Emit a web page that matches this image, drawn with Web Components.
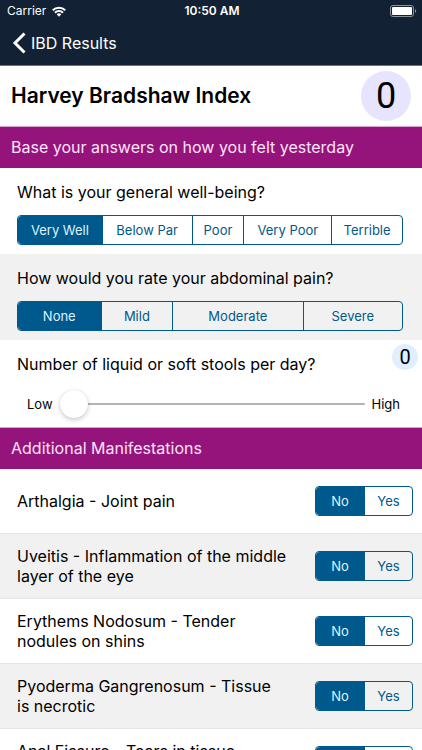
<!DOCTYPE html>
<html lang="en">

	<head>
		<meta charset="UTF-8">
		<meta name="viewport" content="width=device-width, initial-scale=1">
		<title>Harvey Bradshaw Index</title>
		<style>
			body {
				--navy: #122133;
				--purple: #95147b;
				--blue: #00598c;
				--stripe: #f1f1f2;
				margin: 0;
				height: 100vh;
				display: flex;
				flex-direction: column;
				font: 16px/20px Inter, "Liberation Sans", sans-serif;
				color: #000;
				background: #fff;
			}

			main {
				flex: 1;
				min-height: 0;
				overflow-y: auto;
				scrollbar-width: none;
			}
		</style>
	</head>

	<body>
		<status-bar carrier="Carrier" time="10:50 AM"></status-bar>
		<nav-bar>IBD Results</nav-bar>
		<main>
			<score-header score="0">Harvey Bradshaw Index</score-header>
			<section-title>Base your answers on how you felt yesterday</section-title>
			<question-block>
				What is your general well-being?
				<segment-control slot="control" label="General well-being" options="Very Well,Below Par,Poor,Very Poor,Terrible" columns="84fr 90fr 52fr 88fr 71fr"></segment-control>
			</question-block>
			<question-block striped>
				How would you rate your abdominal pain?
				<segment-control slot="control" label="Abdominal pain" options="None,Mild,Moderate,Severe" columns="83fr 72fr 131fr 100fr"></segment-control>
			</question-block>
			<question-block badge="0">
				Number of liquid or soft stools per day?
				<range-slider slot="control" low="Low" high="High" label="Stools per day"></range-slider>
			</question-block>
			<section-title>Additional Manifestations</section-title>
			<symptom-row>Arthalgia - Joint pain</symptom-row>
			<symptom-row striped>Uveitis - Inflammation of the middle layer of the eye</symptom-row>
			<symptom-row>Erythems Nodosum - Tender nodules on shins</symptom-row>
			<symptom-row striped>Pyoderma Gangrenosum - Tissue is&nbsp;necrotic</symptom-row>
			<symptom-row>Anal Fissure - Tears in tissue lining&nbsp;the&nbsp;anus</symptom-row>
		</main>

		<template id="status-bar">
			<style>
				:host {
					display: grid;
					grid-template-columns: 1fr auto 1fr;
					align-items: center;
					height: 22px;
					padding: 0 5px 0 7px;
					font-size: 12px;
					line-height: 16px;
					color: #fff;
					background: var(--navy);
				}
				.left {
					display: flex;
					align-items: center;
					gap: 6px;
				}
				.time {
					font-weight: 600;
				}
				.battery {
					justify-self: end;
				}
				svg {
					display: block;
				}
			</style>
			<div class="left">
				<span class="carrier"></span>
				<svg width="14" height="11" viewBox="0 0 15 11" fill="none" stroke="#fff" stroke-width="2.200">
					<path d="M.8 4.200a9.500 9.500 0 0 1 13.400 0M3.200 6.800a6.100 6.100 0 0 1 8.600 0" />
					<path d="M7.5 11 5 8.500a3.600 3.600 0 0 1 5 0z" fill="#fff" stroke="none" />
				</svg>
			</div>
			<span class="time"></span>
			<svg class="battery" width="27" height="12" viewBox="0 0 27 12">
				<rect x=".5" y=".5" width="23" height="11" rx="2.5" fill="none" stroke="#8a929b" />
				<rect x="2" y="2" width="20" height="8" rx="1" fill="#fff" />
				<path d="M25 4c1.6.5 1.6 3.500 0 4z" fill="#8a929b" />
			</svg>
		</template>

		<template id="nav-bar">
			<style>
				:host {
					display: flex;
					align-items: center;
					box-sizing: border-box;
					height: 44px;
					padding: 0 12px 1px;
					border-bottom: 1px solid #687180;
					background: var(--navy);
				}
				button {
					display: flex;
					align-items: center;
					gap: 5px;
					padding: 0;
					border: 0;
					background: none;
					color: #fff;
					font: inherit;
					cursor: pointer;
				}
			</style>
			<button type="button">
				<svg width="14" height="22" viewBox="0 0 14 22" fill="none" stroke="#fff" stroke-width="3">
					<path d="M12.500 1.500 3 11l9.500 9.500" />
				</svg>
				<slot></slot>
			</button>
		</template>

		<template id="score-header">
			<style>
				:host {
					display: flex;
					align-items: center;
					justify-content: space-between;
					height: 60px;
					padding: 0 11px;
				}
				h1 {
					margin: 0;
					font-size: 21px;
					line-height: 28px;
					font-weight: 600;
				}
				output {
					display: grid;
					place-items: center;
					width: 50px;
					height: 50px;
					border-radius: 50%;
					font-family: Roboto, sans-serif;
					font-size: 36px;
					background: #e6e4fe;
				}
			</style>
			<h1><slot></slot></h1>
			<output></output>
		</template>

		<template id="section-title">
			<style>
				:host {
					display: block;
					padding: 0 11px;
					border-top: 1px solid #dda6d2;
					color: #ffe3fa;
					background: var(--purple);
				}
				h2 {
					margin: 0;
					font-size: inherit;
					line-height: 41px;
					font-weight: 400;
				}
			</style>
			<h2><slot></slot></h2>
		</template>

		<template id="question-block">
			<style>
				:host {
					display: flex;
					flex-direction: column;
					gap: 13px;
					position: relative;
					padding: 14px 19px 9px 17px;
				}
				:host([striped]) {
					background: var(--stripe);
				}
				p {
					margin: 0;
				}
				/* counter in the corner of the block */
				output {
					position: absolute;
					top: 4px;
					right: 4px;
					display: grid;
					place-items: center;
					width: 26px;
					height: 26px;
					border-radius: 50%;
					font-family: Roboto, sans-serif;
					font-size: 20px;
					background: #e0effe;
				}
				output:empty {
					display: none;
				}
			</style>
			<p><slot></slot></p>
			<slot name="control"></slot>
			<output></output>
		</template>

		<template id="segment-control">
			<style>
				:host {
					display: block;
					font-size: 13px;
					line-height: 28px;
				}
				fieldset {
					display: grid;
					min-width: 0;
					margin: 0;
					padding: 0;
					border: 1px solid var(--blue);
					border-radius: 4px;
					overflow: hidden;
				}
				label {
					position: relative;
					color: var(--blue);
					text-align: center;
					white-space: nowrap;
					cursor: pointer;
				}
				label + label {
					border-left: 1px solid var(--blue);
				}
				label:has(:checked) {
					color: #dff2ff;
					background: var(--blue);
				}
				input {
					position: absolute;
					inset: 0;
					margin: 0;
					opacity: 0;
				}
			</style>
			<fieldset></fieldset>
		</template>

		<template id="range-slider">
			<style>
				:host {
					display: flex;
					align-items: center;
					gap: 7px;
					padding: 3px 3px 0 10px;
					font-size: 13px;
				}
				input {
					flex: 1;
					min-width: 0;
					height: 28px;
					margin: 0;
					appearance: none;
					background: none;
				}
				input::-webkit-slider-runnable-track {
					height: 2px;
					border-radius: 1px;
					background: #b4b4b5;
				}
				input::-webkit-slider-thumb {
					appearance: none;
					width: 28px;
					height: 28px;
					margin-top: -13px;
					border-radius: 50%;
					background: #fff;
					box-shadow: 0 2px 5px rgba(0, 0, 0, .2), 0 0 1px rgba(0, 0, 0, .15);
				}
			</style>
			<label for="range" class="low"></label>
			<input id="range" type="range" min="0" max="20" value="0">
			<span class="high"></span>
		</template>

		<template id="symptom-row">
			<style>
				:host {
					display: flex;
					align-items: center;
					justify-content: space-between;
					gap: 18px;
					min-height: 64px;
					padding: 0 9px 0 17px;
					border-bottom: 1px solid #e6e6e7;
				}
				:host([striped]) {
					background: var(--stripe);
				}
				p {
					flex: 1;
					margin: 0;
				}
				segment-control {
					flex: none;
					width: 98px;
				}
			</style>
			<p><slot></slot></p>
			<segment-control options="No,Yes" columns="1fr 1fr"></segment-control>
		</template>
	</body>
	<script>

		class BaseElement extends HTMLElement {
			constructor() {
				super()
				const template = document.getElementById(this.localName);
				this.attachShadow({ mode: 'open' }).appendChild(template.content.cloneNode(true));
			}

			$(selector) {
				return this.shadowRoot.querySelector(selector);
			}
		}

		class StatusBar extends BaseElement {
			connectedCallback() {
				this.$('.carrier').textContent = this.getAttribute('carrier');
				this.$('.time').textContent = this.getAttribute('time');
			}
		}

		class NavBar extends BaseElement {}

		class ScoreHeader extends BaseElement {
			connectedCallback() {
				this.$('output').textContent = this.getAttribute('score');
			}
		}

		class SectionTitle extends BaseElement {}

		class QuestionBlock extends BaseElement {
			connectedCallback() {
				this.$('output').textContent = this.getAttribute('badge') || '';
				this.addEventListener('change-value', (evt) => {
					this.$('output').textContent = evt.detail;
				});
			}
		}

		class SegmentControl extends BaseElement {
			connectedCallback() {
				const fieldset = this.$('fieldset');
				fieldset.style.gridTemplateColumns = this.getAttribute('columns');
				fieldset.setAttribute('aria-label', this.getAttribute('label') || 'Present');
				fieldset.replaceChildren();
				this.getAttribute('options').split(',').forEach((text, i) => {
					const label = document.createElement('label');
					const input = document.createElement('input');
					input.type = 'radio';
					input.name = 'option';
					input.value = text;
					input.checked = i === 0;
					label.append(input, text);
					fieldset.appendChild(label);
				});
			}
		}

		class RangeSlider extends BaseElement {
			connectedCallback() {
				const input = this.$('input');
				this.$('.low').textContent = this.getAttribute('low');
				this.$('.high').textContent = this.getAttribute('high');
				input.setAttribute('aria-label', this.getAttribute('label'));
				input.addEventListener('input', () => {
					this.dispatchEvent(new CustomEvent('change-value', { detail: input.value, bubbles: true }));
				});
			}
		}

		class SymptomRow extends BaseElement {}

		window.customElements.define('status-bar', StatusBar)
		window.customElements.define('nav-bar', NavBar)
		window.customElements.define('score-header', ScoreHeader)
		window.customElements.define('section-title', SectionTitle)
		window.customElements.define('question-block', QuestionBlock)
		window.customElements.define('segment-control', SegmentControl)
		window.customElements.define('range-slider', RangeSlider)
		window.customElements.define('symptom-row', SymptomRow)
	</script>

</html>
